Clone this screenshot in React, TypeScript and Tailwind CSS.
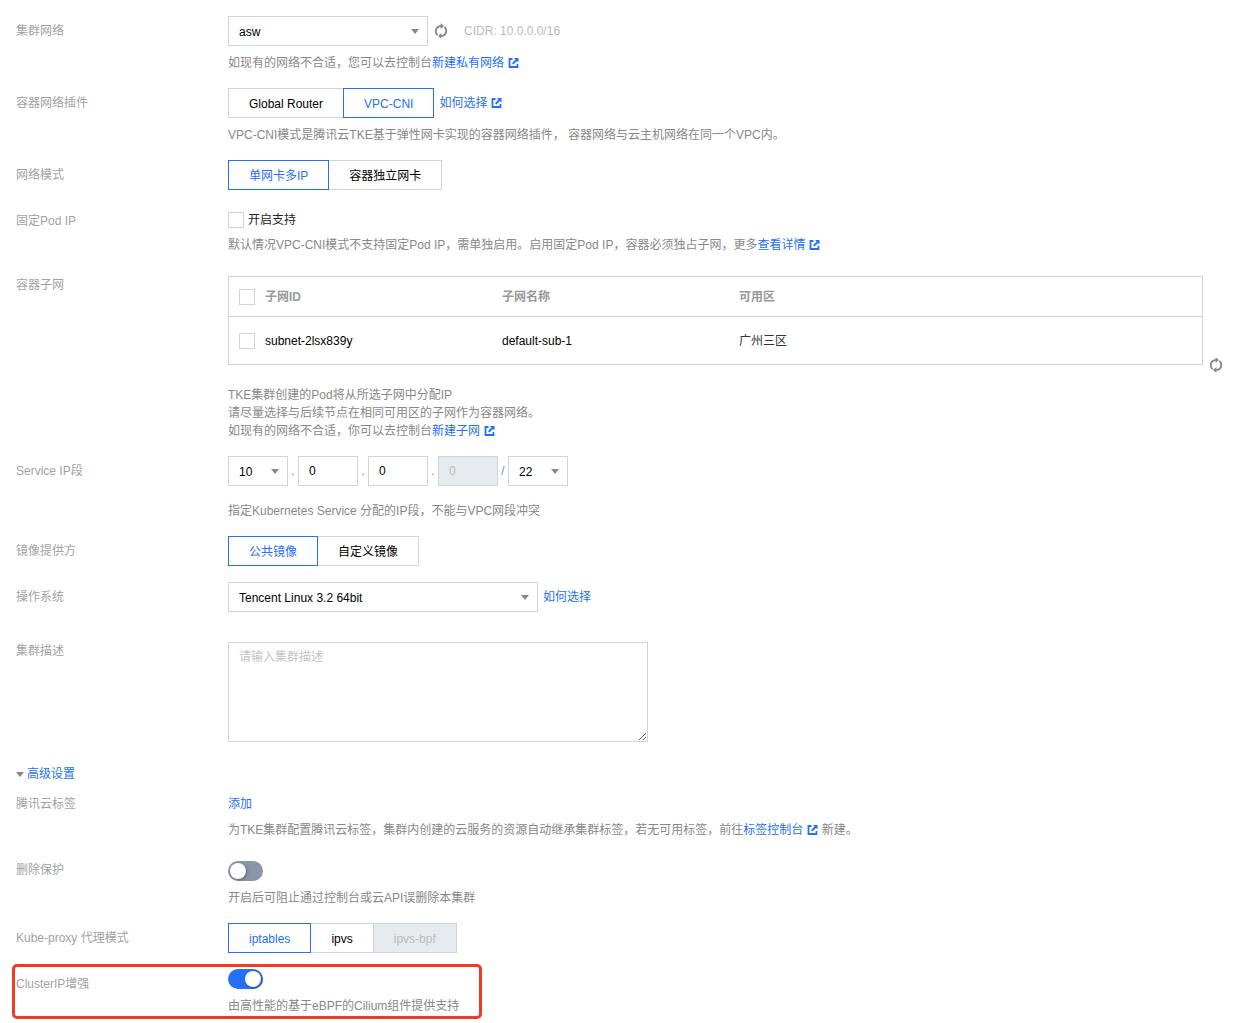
import { useState, type ReactNode } from "react";

function ExternalIcon() {
  return (
    <svg className="ml-1 inline-block align-[-1px]" width="11" height="10" viewBox="0 0 11 10" fill="none" aria-hidden="true">
      <path d="M4.500 1H1.500v8h8V6" stroke="currentColor" strokeWidth="1.800" />
      <path d="M6 0h4.500v4.500L9 3 5.400 6.600 4 5.200 7.500 1.500z" fill="currentColor" />
    </svg>
  );
}

function RefreshIcon() {
  return (
    <svg width="14" height="16" viewBox="0 0 14 16" fill="none" aria-hidden="true">
      <path d="M3.600 12.100A5.200 5.200 0 0 1 5.600 3.100H7.200" stroke="#888" strokeWidth="1.800" />
      <path d="M10.400 3.900A5.200 5.200 0 0 1 8.400 12.900H6.800" stroke="#888" strokeWidth="1.800" />
      <path d="M6.600 0.200 10 3.100 6.600 6zM7.400 10 4 12.900 7.400 15.800z" fill="#888" />
    </svg>
  );
}

function Caret() {
  return (
    <svg width="8" height="5" viewBox="0 0 8 5" aria-hidden="true">
      <path d="M0 0h8L4 5z" fill="#888" />
    </svg>
  );
}

function Link({ children, external = false }: { children: ReactNode; external?: boolean }) {
  return (
    <a href="#" className="text-[#2670f7] hover:underline">
      {children}
      {external && <ExternalIcon />}
    </a>
  );
}

type RowProps = { label: string; htmlFor?: string; padded?: boolean; children: ReactNode };

function Row({ label, htmlFor, padded = false, children }: RowProps) {
  const cls = padded ? "block w-[212px] shrink-0 pt-1.5 text-[#a2a2a2]" : "block w-[212px] shrink-0 text-[#a2a2a2]";
  return (
    <div className="flex items-start">
      {htmlFor ? (
        <label htmlFor={htmlFor} className={cls}>{label}</label>
      ) : (
        <span className={cls}>{label}</span>
      )}
      <div className="min-w-0 flex-1">{children}</div>
    </div>
  );
}

function Help({ children }: { children: ReactNode }) {
  return <p className="mt-2 text-[#888]">{children}</p>;
}

type SelectProps = { id: string; label?: string; options: string[]; width: string };

function Select({ id, label, options, width }: SelectProps) {
  return (
    <div className={`relative ${width}`}>
      <select
        id={id}
        aria-label={label}
        className="block h-[30px] w-full appearance-none rounded-none border border-[#cfd5de] bg-white pt-0.5 pr-6 pl-2.5 text-black outline-none"
      >
        {options.map((o) => (
          <option key={o}>{o}</option>
        ))}
      </select>
      <span className="pointer-events-none absolute inset-y-0 right-[9px] flex items-center">
        <Caret />
      </span>
    </div>
  );
}

type SegmentProps = { label: string; options: string[]; initial: string; disabled?: string[] };

function Segment({ label, options, initial, disabled = [] }: SegmentProps) {
  const [value, setValue] = useState(initial);
  return (
    <div role="group" aria-label={label} className="flex">
      {options.map((o) => {
        const off = disabled.includes(o);
        const tone = off
          ? "border-[#cfd5de] bg-[#e7eaef] text-[#bbb]"
          : o === value
            ? "z-10 border-[#2670f7] bg-white text-[#2670f7]"
            : "border-[#cfd5de] bg-white text-black";
        return (
          <button
            key={o}
            type="button"
            disabled={off}
            aria-pressed={o === value}
            onClick={() => setValue(o)}
            className={`relative -ml-px h-[30px] border px-5 pt-0.5 first:ml-0 ${tone}`}
          >
            {o}
          </button>
        );
      })}
    </div>
  );
}

function Check({ id, label }: { id: string; label?: string }) {
  return (
    <input
      id={id}
      aria-label={label}
      type="checkbox"
      className="block size-4 shrink-0 appearance-none border border-[#cfd5de] bg-white checked:bg-[#2670f7]"
    />
  );
}

function Toggle({ id, on = false }: { id: string; on?: boolean }) {
  return (
    <input
      id={id}
      type="checkbox"
      role="switch"
      defaultChecked={on}
      className="flex h-5 w-[35px] appearance-none items-center rounded-full bg-[#8a97ab] px-0.5 before:size-4 before:rounded-full before:bg-white before:shadow-[1px_1px_3px_rgba(0,0,0,0.35)] checked:justify-end checked:bg-[#2670f7]"
    />
  );
}

function Octet({ label, disabled = false }: { label: string; disabled?: boolean }) {
  return (
    <input
      type="text"
      aria-label={label}
      defaultValue="0"
      disabled={disabled}
      className="block h-[30px] w-[60px] rounded-none border border-[#cfd5de] bg-white px-2.5 text-black outline-none disabled:bg-[#e7eaef] disabled:text-[#bbb]"
    />
  );
}

function Sep({ children }: { children: ReactNode }) {
  return <span className="w-2.5 text-center text-[#888]">{children}</span>;
}

function SubnetTable() {
  return (
    <table className="mb-2 min-w-0 flex-1 table-fixed border-collapse border border-[#cfd5de] text-left">
      <colgroup>
        <col className="w-[26px]" />
        <col className="w-[237px]" />
        <col className="w-[237px]" />
        <col />
      </colgroup>
      <thead>
        <tr className="h-10 border-b border-[#cfd5de] text-[#999]">
          <th className="pl-2.5"><Check id="subnet-all" label="全选" /></th>
          <th className="pl-2.5 font-bold">子网ID</th>
          <th className="pl-2.5 font-bold">子网名称</th>
          <th className="pl-2.5 font-bold">可用区</th>
        </tr>
      </thead>
      <tbody>
        <tr className="h-12 text-black">
          <td className="pl-2.5"><Check id="subnet-1" label="subnet-2lsx839y" /></td>
          <td className="pl-2.5">subnet-2lsx839y</td>
          <td className="pl-2.5">default-sub-1</td>
          <td className="pl-2.5 text-[#333]">广州三区</td>
        </tr>
      </tbody>
    </table>
  );
}

export default function App() {
  const [open, setOpen] = useState(true);
  return (
    <main className="min-h-screen bg-white px-4 pt-4 pb-2 font-['Liberation_Sans','Noto_Sans_CJK_SC',sans-serif] text-[12px] leading-[18px]">
      <form className="flex flex-col gap-4" onSubmit={(e) => e.preventDefault()}>
        <Row label="集群网络" htmlFor="network" padded>
          <div className="flex items-center">
            <Select id="network" options={["asw"]} width="w-[200px]" />
            <button type="button" aria-label="刷新网络" className="ml-1.5"><RefreshIcon /></button>
            <span className="ml-4 text-[#bbb]">CIDR: 10.0.0.0/16</span>
          </div>
          <Help>如现有的网络不合适，您可以去控制台<Link external>新建私有网络</Link></Help>
        </Row>

        <Row label="容器网络插件" padded>
          <div className="flex items-center gap-[5px]">
            <Segment label="容器网络插件" options={["Global Router", "VPC-CNI"]} initial="VPC-CNI" />
            <Link external>如何选择</Link>
          </div>
          <Help>VPC-CNI模式是腾讯云TKE基于弹性网卡实现的容器网络插件， 容器网络与云主机网络在同一个VPC内。</Help>
        </Row>

        <Row label="网络模式" padded>
          <Segment label="网络模式" options={["单网卡多IP", "容器独立网卡"]} initial="单网卡多IP" />
        </Row>

        <Row label="固定Pod IP" padded>
          <div className="py-1.5">
            <div className="flex items-center gap-1">
              <Check id="fixed-ip" />
              <label htmlFor="fixed-ip" className="leading-4 text-[#222]">开启支持</label>
            </div>
            <Help>默认情况VPC-CNI模式不支持固定Pod IP，需单独启用。启用固定Pod IP，容器必须独占子网，更多<Link external>查看详情</Link></Help>
          </div>
        </Row>

        <Row label="容器子网">
          <div className="flex items-end gap-1.5">
            <SubnetTable />
            <button type="button" aria-label="刷新子网" className="w-[15px]"><RefreshIcon /></button>
          </div>
          <div className="mt-[13px] text-[#888]">
            <p>TKE集群创建的Pod将从所选子网中分配IP</p>
            <p>请尽量选择与后续节点在相同可用区的子网作为容器网络。</p>
            <p>如现有的网络不合适，你可以去控制台<Link external>新建子网</Link></p>
          </div>
        </Row>

        <Row label="Service IP段" htmlFor="service-ip" padded>
          <div className="mb-4 flex items-center">
            <Select id="service-ip" options={["10", "172", "192"]} width="w-[60px]" />
            <Sep>.</Sep>
            <Octet label="第二段" />
            <Sep>.</Sep>
            <Octet label="第三段" />
            <Sep>.</Sep>
            <Octet label="第四段" disabled />
            <Sep>/</Sep>
            <Select id="mask" label="掩码" options={["22", "23", "24"]} width="w-[60px]" />
          </div>
          <Help>指定Kubernetes Service 分配的IP段，不能与VPC网段冲突</Help>
        </Row>

        <Row label="镜像提供方" padded>
          <Segment label="镜像提供方" options={["公共镜像", "自定义镜像"]} initial="公共镜像" />
        </Row>

        <Row label="操作系统" htmlFor="os" padded>
          <div className="flex items-center gap-[5px]">
            <Select id="os" options={["Tencent Linux 3.2 64bit"]} width="w-[310px]" />
            <Link>如何选择</Link>
          </div>
        </Row>

        <div className="mt-3.5">
          <Row label="集群描述" htmlFor="description">
            <textarea
              id="description"
              placeholder="请输入集群描述"
              className="block h-[100px] w-[420px] max-w-full resize rounded-none border border-[#cfd5de] bg-white px-2.5 py-[5px] text-black outline-none placeholder:text-[#c4c4c4]"
            />
          </Row>
        </div>

        <div className="mt-[7px] -mb-1">
          <button
            type="button"
            aria-expanded={open}
            onClick={() => setOpen(!open)}
            className="flex items-center gap-[3px] text-[#2670f7]"
          >
            <Caret />
            高级设置
          </button>
        </div>

        {open && (
          <>
            <Row label="腾讯云标签">
              <Link>添加</Link>
              <Help>为TKE集群配置腾讯云标签，集群内创建的云服务的资源自动继承集群标签，若无可用标签，前往<Link external>标签控制台</Link> 新建。</Help>
            </Row>

            <div className="mt-1.5">
              <Row label="删除保护" htmlFor="protect">
                <Toggle id="protect" />
                <Help>开启后可阻止通过控制台或云API误删除本集群</Help>
              </Row>
            </div>

            <Row label="Kube-proxy 代理模式" padded>
              <Segment label="Kube-proxy 代理模式" options={["iptables", "ipvs", "ipvs-bpf"]} initial="iptables" disabled={["ipvs-bpf"]} />
            </Row>

            <div className="relative">
              <Row label="ClusterIP增强" htmlFor="cluster-ip" padded>
                <Toggle id="cluster-ip" on />
                <Help>由高性能的基于eBPF的Cilium组件提供支持</Help>
              </Row>
              <div className="pointer-events-none absolute -top-[5px] -bottom-1 -left-1 w-[470px] rounded-[5px] border-3 border-[#f03a22]" />
            </div>
          </>
        )}
      </form>
    </main>
  );
}
